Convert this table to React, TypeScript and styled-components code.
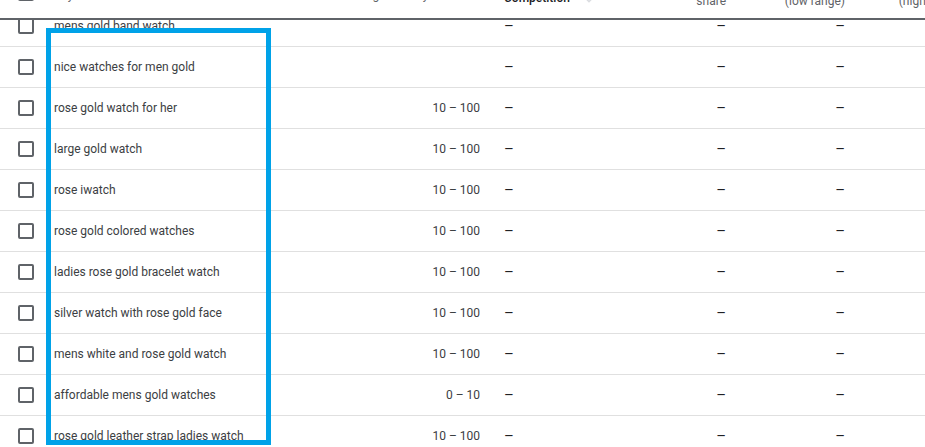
import React, { useLayoutEffect, useRef } from "react";
import styled, { createGlobalStyle } from "styled-components";

const Global = createGlobalStyle`
  html, body { margin: 0; padding: 0; background: #fff; }
  body { font-family: Roboto, "Liberation Sans", Arial, sans-serif; }
`;

const COLS = "46px 284px 166px 114px 132px 119px 118px";

const Page = styled.div`
  position: relative;
  width: 925px;
  height: 447px;
  overflow: hidden;
`;

const Viewport = styled.div`
  width: 925px;
  height: 447px;
  overflow: hidden;
`;

const Table = styled.div`
  width: 979px;
`;

const HeaderRow = styled.div`
  position: sticky;
  top: -35px;
  z-index: 1;
  display: grid;
  grid-template-columns: ${COLS};
  align-items: center;
  height: 55px;
  box-sizing: border-box;
  padding: 12px 0 9px;
  border-bottom: 2px solid #5f6368;
  background: #fff;
`;

const HeadCell = styled.div<{ $align?: "left" | "right"; $strong?: boolean; $drop?: number }>`
  box-sizing: border-box;
  padding: ${(p) => (p.$align === "right" ? "0 16px 0 0" : "0 0 0 8px")};
  padding-top: ${(p) => (p.$drop ?? 0) * 2}px;
  text-align: ${(p) => p.$align ?? "left"};
  font-size: 12px;
  line-height: 16px;
  font-weight: ${(p) => (p.$strong ? 500 : 400)};
  color: ${(p) => (p.$strong ? "#202124" : "#5f6368")};
  white-space: nowrap;
  display: flex;
  align-items: center;
  justify-content: ${(p) => (p.$align === "right" ? "flex-end" : "flex-start")};
  gap: 12px;
`;

const Row = styled.div`
  display: grid;
  grid-template-columns: ${COLS};
  align-items: center;
  height: 41px;
  box-sizing: border-box;
  border-bottom: 1px solid #e0e0e0;
`;

const CheckCell = styled.div`
  padding-left: 18px;
  display: flex;
  align-items: center;
`;

const Checkbox = styled.span`
  display: block;
  width: 16px;
  height: 16px;
  box-sizing: border-box;
  border: 2px solid #5f6368;
  border-radius: 2px;
`;

const Cell = styled.div<{ $align?: "left" | "right" }>`
  box-sizing: border-box;
  padding: ${(p) => (p.$align === "right" ? "0 16px 0 0" : "0 0 0 8px")};
  text-align: ${(p) => p.$align ?? "left"};
  font-size: 12px;
  line-height: 16px;
  color: #3c4043;
  white-space: nowrap;
`;

const Dash = styled.span`
  font-size: 15px;
  color: #202124;
`;

const Highlight = styled.div`
  position: absolute;
  left: 46px;
  top: 28px;
  width: 225px;
  height: 417px;
  box-sizing: border-box;
  border: 5px solid #00a2e8;
  pointer-events: none;
  z-index: 2;
`;

const SortIcon = () => (
  <svg width="14" height="14" viewBox="0 0 24 24" fill="#dadce0">
    <path d="M20 12l-1.41-1.41L13 16.17V4h-2v12.17l-5.58-5.59L4 12l8 8 8-8z" />
  </svg>
);

type Item = { kw: string; avg: string };

const rows: Item[] = [
  { kw: "mens gold band watch", avg: "" },
  { kw: "nice watches for men gold", avg: "" },
  { kw: "rose gold watch for her", avg: "10 – 100" },
  { kw: "large gold watch", avg: "10 – 100" },
  { kw: "rose iwatch", avg: "10 – 100" },
  { kw: "rose gold colored watches", avg: "10 – 100" },
  { kw: "ladies rose gold bracelet watch", avg: "10 – 100" },
  { kw: "silver watch with rose gold face", avg: "10 – 100" },
  { kw: "mens white and rose gold watch", avg: "10 – 100" },
  { kw: "affordable mens gold watches", avg: "0 – 10" },
  { kw: "rose gold leather strap ladies watch", avg: "10 – 100" },
];

export default function App() {
  const ref = useRef<HTMLDivElement>(null);
  useLayoutEffect(() => {
    if (ref.current) ref.current.scrollTop = 49;
  }, []);
  return (
    <Page>
      <Global />
      <Viewport ref={ref}>
        <Table>
          <HeaderRow>
            <CheckCell>
              <Checkbox />
            </CheckCell>
            <HeadCell $drop={2}>Keyword</HeadCell>
            <HeadCell $align="right" $drop={2}>
              Avg. monthly searches
            </HeadCell>
            <HeadCell $strong $drop={5}>
              Competition <SortIcon />
            </HeadCell>
            <HeadCell $align="right">
              Ad impression
              <br />
              share
            </HeadCell>
            <HeadCell $align="right">
              Top of page bid
              <br />
              (low range)
            </HeadCell>
            <HeadCell $align="right">
              Top of page bid
              <br />
              (high range)
            </HeadCell>
          </HeaderRow>
          {rows.map((r) => (
            <Row key={r.kw}>
              <CheckCell>
                <Checkbox />
              </CheckCell>
              <Cell>{r.kw}</Cell>
              <Cell $align="right">{r.avg}</Cell>
              <Cell>
                <Dash>–</Dash>
              </Cell>
              <Cell $align="right">
                <Dash>–</Dash>
              </Cell>
              <Cell $align="right">
                <Dash>–</Dash>
              </Cell>
              <Cell $align="right">
                <Dash>–</Dash>
              </Cell>
            </Row>
          ))}
        </Table>
      </Viewport>
      <Highlight />
    </Page>
  );
}
